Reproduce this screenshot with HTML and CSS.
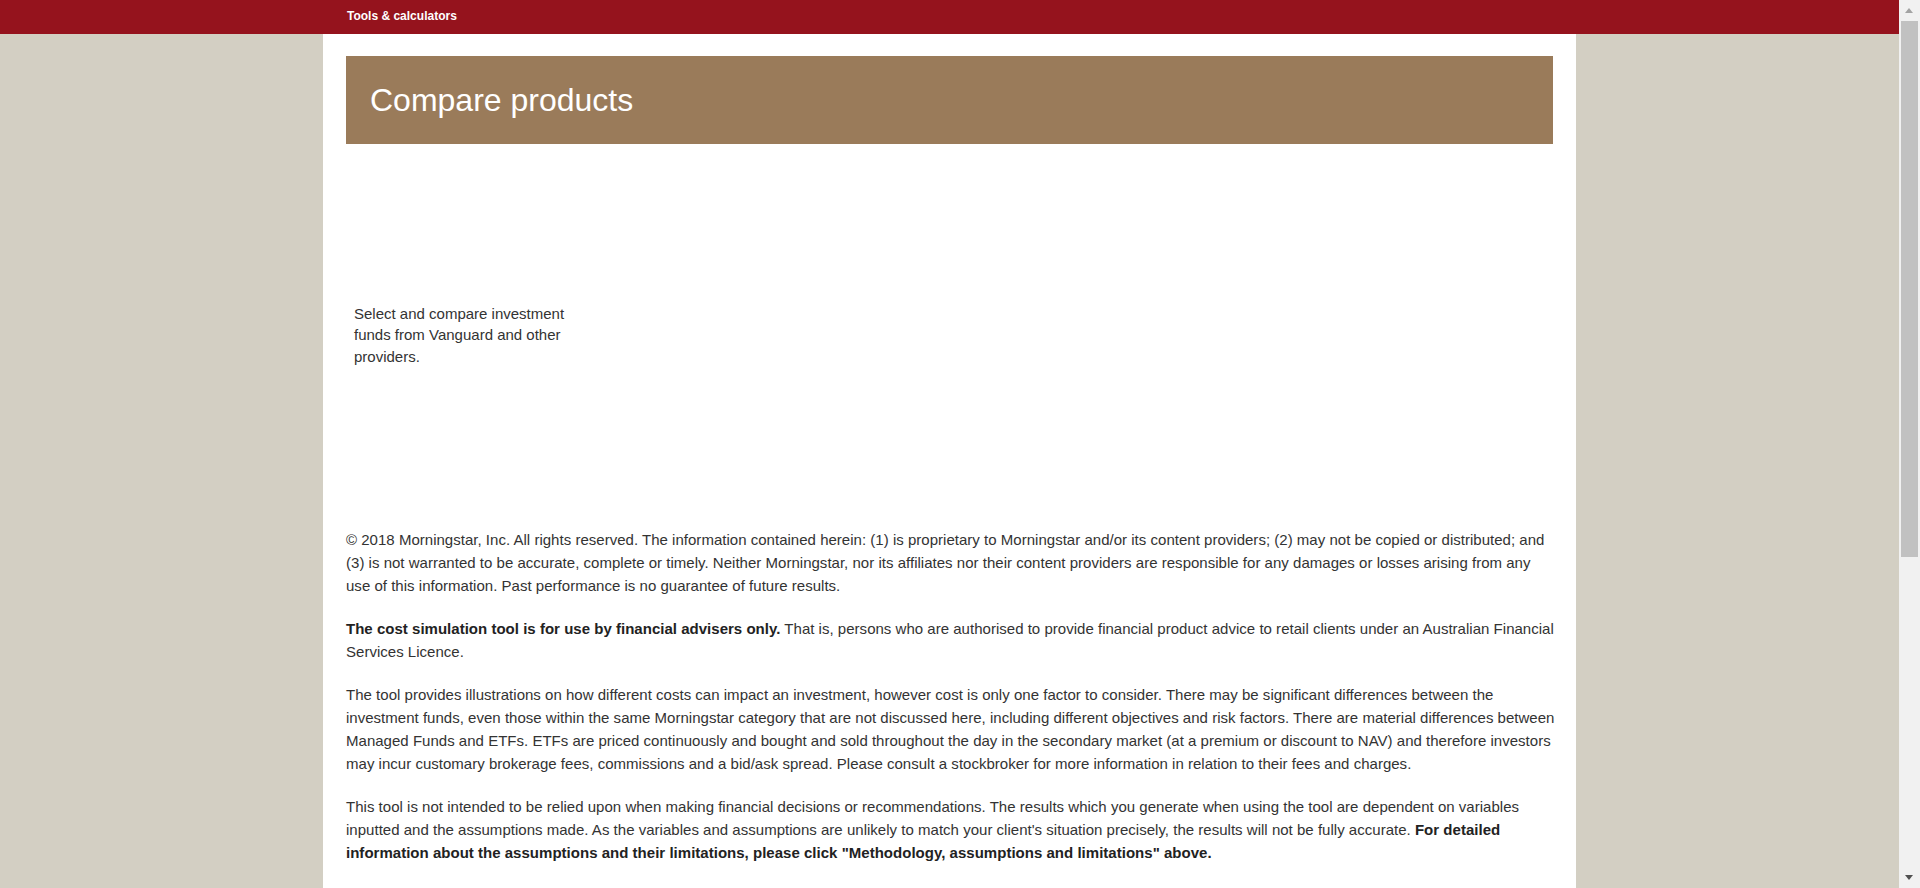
FILE: index.html
```html
<!DOCTYPE html>
<html lang="en">
<head>
<meta charset="utf-8">
<title>Compare products</title>
<link rel="stylesheet" href="styles.css">
</head>
<body>
<header class="topbar">
  <div class="topbar-inner">
    <span class="topbar-title">Tools &amp; calculators</span>
  </div>
</header>
<main class="page">
  <div class="banner">
    <h1 class="banner-title">Compare products</h1>
  </div>
  <section class="intro">
    <div class="intro-col">
      <p class="intro-text">Select and compare investment funds from Vanguard and other providers.</p>
    </div>
  </section>
  <section class="disclaimer">
    <p>© 2018 Morningstar, Inc. All rights reserved. The information contained herein: (1) is proprietary to Morningstar and/or its content providers; (2) may not be copied or distributed; and (3) is not warranted to be accurate, complete or timely. Neither Morningstar, nor its affiliates nor their content providers are responsible for any damages or losses arising from any use of this information. Past performance is no guarantee of future results.</p>
    <p><strong>The cost simulation tool is for use by financial advisers only.</strong> That is, persons who are authorised to provide financial product advice to retail clients under an Australian Financial Services Licence.</p>
    <p>The tool provides illustrations on how different costs can impact an investment, however cost is only one factor to consider. There may be significant differences between the investment funds, even those within the same Morningstar category that are not discussed here, including different objectives and risk factors. There are material differences between Managed Funds and ETFs. ETFs are priced continuously and bought and sold throughout the day in the secondary market (at a premium or discount to NAV) and therefore investors may incur customary brokerage fees, commissions and a bid/ask spread. Please consult a stockbroker for more information in relation to their fees and charges.</p>
    <p>This tool is not intended to be relied upon when making financial decisions or recommendations. The results which you generate when using the tool are dependent on variables inputted and the assumptions made. As the variables and assumptions are unlikely to match your client's situation precisely, the results will not be fully accurate. <strong>For detailed information about the assumptions and their limitations, please click "Methodology, assumptions and limitations" above.</strong></p>
  </section>
</main>
<div class="scrollbar" aria-hidden="true">
  <div class="sb-arrow sb-up"></div>
  <div class="sb-thumb"></div>
  <div class="sb-arrow sb-down"></div>
</div>
</body>
</html>
```
FILE: styles.css
```css
html, body {
  margin: 0;
  padding: 0;
}
body {
  background: #d3cfc3;
  font-family: "Liberation Sans", Arial, sans-serif;
  color: #333333;
  padding-right: 21px;
}
.topbar {
  background: #95131d;
  height: 34px;
}
.topbar-inner {
  width: 1207px;
  margin: 0 auto;
  padding: 6px 0 0 1px;
  box-sizing: border-box;
}
.topbar-title {
  color: #ffffff;
  font-weight: bold;
  font-size: 12px;
  line-height: 14px;
}
.page {
  width: 1253px;
  margin: 0 auto;
  background: #ffffff;
  padding: 22px 23px 520px;
  box-sizing: border-box;
}
.banner {
  background: #9a7b5a;
  height: 88px;
  display: flex;
  align-items: center;
  padding: 0 24px;
}
.banner-title {
  margin: 0;
  color: #ffffff;
  font-weight: normal;
  font-size: 32px;
  line-height: 36px;
}
.intro {
  height: 384px;
  display: flex;
  align-items: center;
}
.intro-col {
  width: 241px;
  padding: 0 8px;
  box-sizing: border-box;
  margin-top: -2px;
}
.intro-text {
  margin: 0;
  font-size: 15px;
  line-height: 21.5px;
}
.disclaimer {
  margin-right: -2px;
}
.disclaimer p {
  margin: 0 0 20px;
  font-size: 15px;
  line-height: 23px;
  letter-spacing: 0.02px;
}
.disclaimer strong {
  color: #222222;
}
.scrollbar {
  position: fixed;
  top: 0;
  right: 0;
  width: 21px;
  height: 100%;
  background: #f1f1f1;
}
.sb-thumb {
  position: absolute;
  left: 2px;
  top: 21px;
  width: 17px;
  height: 536px;
  background: #c1c1c1;
}
.sb-arrow {
  position: absolute;
  left: 6px;
  width: 0;
  height: 0;
  border-left: 4.5px solid transparent;
  border-right: 4.5px solid transparent;
}
.sb-up {
  top: 8px;
  border-bottom: 5px solid #a3a3a3;
}
.sb-down {
  bottom: 8px;
  border-top: 5px solid #505050;
}
```
